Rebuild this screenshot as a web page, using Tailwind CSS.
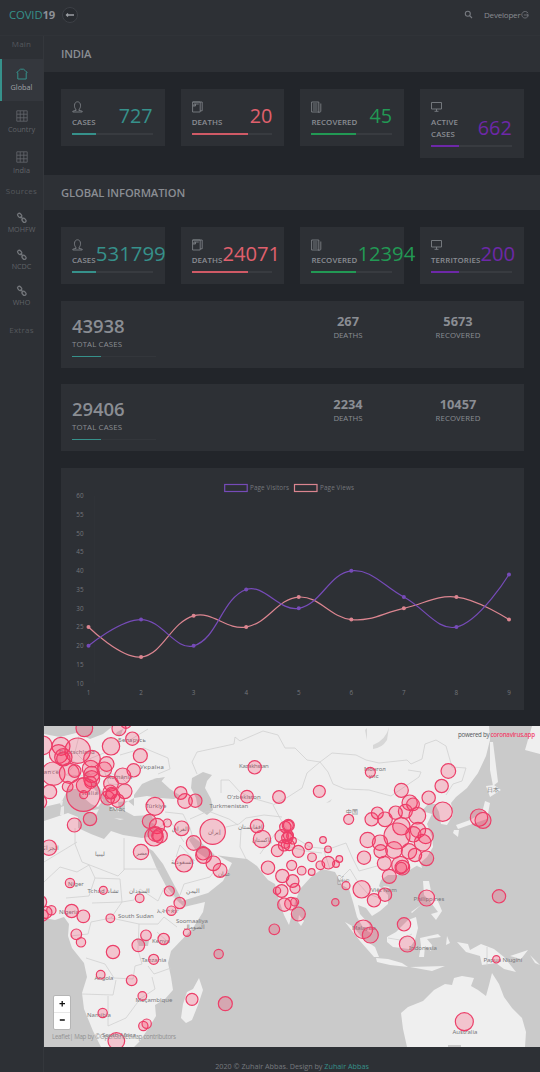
<!DOCTYPE html>
<html lang="en">
<head>
<meta charset="utf-8">
<title>COVID19</title>
<script src="https://cdn.jsdelivr.net/npm/@tailwindcss/browser@4"></script>
</head>
<body class="w-[540px] h-[1072px] overflow-hidden bg-[#2d3035] font-['Open_Sans','Noto_Sans',sans-serif] text-[#8a8d93]">
<svg class="hidden">
  <defs>
    <symbol id="user" viewBox="0 0 11 12"><path d="M3.600 8C2.700 7 2.400 5.600 2.500 4.200C2.600 2 4 .8 5.500 .8S8.400 2 8.500 4.200C8.600 5.600 8.300 7 7.400 8L6.800 9.300L10.200 10.200V11H.8V10.200L4.200 9.300Z" /></symbol>
    <symbol id="bill" viewBox="0 0 11 12"><path d="M.6 1H8.200V11H.6ZM.6 1H10.200V9.800H8.200M2 3H6.800M2 5V3M.6 5H3.500V3" /></symbol>
    <symbol id="paper" viewBox="0 0 11 12"><path d="M.6 1H7.800V11H.6ZM9.800 2.500V10.500L9 11.200H7M2 3H6.500M2 5H6.500M2 7H6.500M2 9H6.500" /></symbol>
    <symbol id="screen" viewBox="0 0 11 12"><path d="M.5 1.500H10.500V8H.5ZM3.500 10.300H7.500M5.500 8V10.300" /></symbol>
    <symbol id="grid" viewBox="0 0 12 12"><path d="M.8 .8H11.200V11.200H.8ZM4.200 .8V11.200M7.800 .8V11.200M.8 4.200H11.200M.8 7.800H11.200" /></symbol>
    <symbol id="link" viewBox="0 0 12 12"><rect x="-2.300" y="-1.600" width="4.600" height="3.200" rx="1.500" transform="translate(3.700 3.400) rotate(48)"/><rect x="-2.300" y="-1.600" width="4.600" height="3.200" rx="1.500" transform="translate(8 8.300) rotate(48)"/><path d="M4.500 4.500L7.300 7.300"/></symbol>
  </defs>
</svg>

<header class="flex h-9 items-center border-b border-[#303338] pl-[9px] pr-[11px] pb-[6px]">
  <div class="flex items-center">
    <span class="w-[49px] whitespace-nowrap text-[11.300px] leading-4 tracking-[-.1px]"><span class="font-medium text-[#36918b]">COVID</span><span class="font-bold text-[#8c8f95]">19</span></span>
    <span class="ml-[4px] flex h-4 w-4 items-center justify-center rounded-full border border-[#3d4046] bg-[#282b30]">
      <svg class="h-2 w-[10px]" viewBox="0 0 10 8" fill="none" stroke="#9a9da2" stroke-width="1.300"><path d="M9 4H1.500M3 2.500L1.500 4L3 5.500"/></svg>
    </span>
  </div>
  <div class="ml-auto flex items-center text-[8px]">
    <svg class="mr-[11px] h-[9px] w-[9px]" viewBox="0 0 9 9" fill="none" stroke="#777a80" stroke-width="1.100"><circle cx="3.800" cy="3.700" r="2.500"/><path d="M5.600 5.600L8 8"/></svg>
    <span class="w-[36px] tracking-[-0.200px] whitespace-nowrap">Developer</span>
    <svg class="ml-[1px] h-2 w-2" viewBox="0 0 8 8" fill="none" stroke="#777a80" stroke-width=".8"><path d="M7 2.200A3.300 3.300 0 1 0 7.300 4.500M2.800 4H7.300M6 2.700L7.300 4L6 5.300"/></svg>
  </div>
</header>

<div class="flex h-[1036px]">
  <nav class="flex w-[44px] shrink-0 flex-col border-r border-[#34373c] text-center text-[7.300px] text-[#606368]">
    <div class="h-[23px] pt-[2px] text-[8px] leading-3 tracking-[.25px] text-[#55585d]">Main</div>
    <div class="flex h-[42px] flex-col items-center border-l-2 border-[#36918b] bg-[#34373d] pt-[9px] pr-[2px] text-[#a0a3a8]">
      <svg class="h-3 w-3" viewBox="0 0 12 12" fill="none" stroke="#36918b" stroke-width="1"><path d="M1.800 11V4.800L.8 4.500L2.500 2.800L4.500 1.200H7.500L9.500 2.800L11.200 4.500L10.200 4.800V11Z"/></svg>
      <span class="mt-[1px] leading-3 font-medium">Global</span>
    </div>
    <div class="flex h-[41px] flex-col items-center pt-[9px]"><svg class="h-3 w-3" fill="none" stroke="#65686d" stroke-width=".8"><use href="#grid"/></svg><span class="mt-[1px] leading-3">Country</span></div>
    <div class="flex h-[40px] flex-col items-center pt-[9px]"><svg class="h-3 w-3" fill="none" stroke="#65686d" stroke-width=".8"><use href="#grid"/></svg><span class="mt-[1px] leading-3">India</span></div>
    <div class="h-[29px] pt-[3px] text-[8px] leading-3 tracking-[.25px] text-[#55585d]">Sources</div>
    <div class="flex h-[36.500px] flex-col items-center pt-[1px]"><svg class="h-3 w-3" fill="none" stroke="#73767b" stroke-width="1.300"><use href="#link"/></svg><span class="leading-[11px] text-[7.200px]">MOHFW</span></div>
    <div class="flex h-[36.500px] flex-col items-center pt-[1px]"><svg class="h-3 w-3" fill="none" stroke="#73767b" stroke-width="1.300"><use href="#link"/></svg><span class="leading-[11px] text-[7.200px]">NCDC</span></div>
    <div class="flex h-[37px] flex-col items-center pt-[1px]"><svg class="h-3 w-3" fill="none" stroke="#73767b" stroke-width="1.300"><use href="#link"/></svg><span class="leading-[11px] text-[7.200px]">WHO</span></div>
    <div class="pt-[3px] text-[8px] leading-3 tracking-[.25px] text-[#55585d]">Extras</div>
  </nav>

  <main class="flex w-[496px] shrink-0 flex-col bg-[#22252a]">
    <h2 class="flex h-9 shrink-0 items-center bg-[#2d3035] pl-[17px] pt-px text-[11.200px] font-semibold tracking-[-.2px]">INDIA</h2>
    <section class="flex h-[103px] shrink-0 items-start gap-4 pl-[17px] pt-[17px]">
      <div class="h-[57px] w-[103.700px] shrink-0 bg-[#2d3035] pl-[11px] pr-3 pt-3"><div class="flex h-[27px] items-end justify-between"><div class="text-[7.900px] font-semibold leading-3 tracking-[.1px]"><svg class="mb-[3px] h-3 w-[11px]" fill="none" stroke="#7c7f85" stroke-width=".9"><use href="#user"/></svg>CASES</div><b class="text-[19.800px] font-normal leading-[25px] text-[#36918b]">727</b></div><div class="mt-[5px] h-[2px] bg-[#383b40]"><div class="h-full w-[30%] bg-[#36918b]"></div></div></div>
      <div class="h-[57px] w-[103.700px] shrink-0 bg-[#2d3035] pl-[11px] pr-3 pt-3"><div class="flex h-[27px] items-end justify-between"><div class="text-[7.900px] font-semibold leading-3 tracking-[.1px]"><svg class="mb-[3px] h-3 w-[11px]" fill="none" stroke="#7c7f85" stroke-width=".9"><use href="#bill"/></svg>DEATHS</div><b class="text-[19.800px] font-normal leading-[25px] text-[#e0606d]">20</b></div><div class="mt-[5px] h-[2px] bg-[#383b40]"><div class="h-full w-[70%] bg-[#d05a66]"></div></div></div>
      <div class="h-[57px] w-[103.700px] shrink-0 bg-[#2d3035] pl-[11px] pr-3 pt-3"><div class="flex h-[27px] items-end justify-between"><div class="text-[7.900px] font-semibold leading-3 tracking-[.1px]"><svg class="mb-[3px] h-3 w-[11px]" fill="none" stroke="#7c7f85" stroke-width=".9"><use href="#paper"/></svg>RECOVERED</div><b class="text-[19.800px] font-normal leading-[25px] text-[#229954]">45</b></div><div class="mt-[5px] h-[2px] bg-[#383b40]"><div class="h-full w-[55%] bg-[#229954]"></div></div></div>
      <div class="h-[69px] w-[103.700px] shrink-0 bg-[#2d3035] pl-[11px] pr-3 pt-3"><div class="flex h-[39px] items-end justify-between"><div class="text-[7.900px] font-semibold leading-3 tracking-[.1px]"><svg class="mb-[3px] h-3 w-[11px]" fill="none" stroke="#7c7f85" stroke-width=".9"><use href="#screen"/></svg>ACTIVE<br>CASES</div><b class="text-[19.800px] font-normal leading-[25px] text-[#6d28a8]">662</b></div><div class="mt-[5px] h-[2px] bg-[#383b40]"><div class="h-full w-[35%] bg-[#6d28a8]"></div></div></div>
    </section>

    <h2 class="flex h-[35px] shrink-0 items-center bg-[#2d3035] pl-[17px] pt-px text-[11.200px] font-semibold tracking-[-.1px]">GLOBAL INFORMATION</h2>
    <section class="flex h-[91px] shrink-0 items-start gap-4 pl-[17px] pt-[17px]">
      <div class="h-[57px] w-[103.700px] shrink-0 bg-[#2d3035] pl-[11px] pr-3 pt-3"><div class="flex h-[27px] items-end justify-between"><div class="text-[7.900px] font-semibold leading-3 tracking-[.1px]"><svg class="mb-[3px] h-3 w-[11px]" fill="none" stroke="#7c7f85" stroke-width=".9"><use href="#user"/></svg>CASES</div><b class="text-[20.400px] font-normal leading-[25px] text-[#36918b]">531799</b></div><div class="mt-[5px] h-[2px] bg-[#383b40]"><div class="h-full w-[30%] bg-[#36918b]"></div></div></div>
      <div class="h-[57px] w-[103.700px] shrink-0 bg-[#2d3035] pl-[11px] pr-3 pt-3"><div class="flex h-[27px] items-end justify-between"><div class="text-[7.900px] font-semibold leading-3 tracking-[.1px]"><svg class="mb-[3px] h-3 w-[11px]" fill="none" stroke="#7c7f85" stroke-width=".9"><use href="#bill"/></svg>DEATHS</div><b class="text-[20.200px] font-normal leading-[25px] text-[#e0606d]">24071</b></div><div class="mt-[5px] h-[2px] bg-[#383b40]"><div class="h-full w-[70%] bg-[#d05a66]"></div></div></div>
      <div class="h-[57px] w-[103.700px] shrink-0 bg-[#2d3035] pl-[11px] pr-3 pt-3"><div class="flex h-[27px] items-end justify-between"><div class="text-[7.900px] font-semibold leading-3 tracking-[.1px]"><svg class="mb-[3px] h-3 w-[11px]" fill="none" stroke="#7c7f85" stroke-width=".9"><use href="#paper"/></svg>RECOVERED</div><b class="text-[20.200px] font-normal leading-[25px] text-[#229954]">12394</b></div><div class="mt-[5px] h-[2px] bg-[#383b40]"><div class="h-full w-[55%] bg-[#229954]"></div></div></div>
      <div class="h-[57px] w-[103.700px] shrink-0 bg-[#2d3035] pl-[11px] pr-3 pt-3"><div class="flex h-[27px] items-end justify-between"><div class="text-[7.900px] font-semibold leading-3 tracking-[.1px]"><svg class="mb-[3px] h-3 w-[11px]" fill="none" stroke="#7c7f85" stroke-width=".9"><use href="#screen"/></svg>TERRITORIES</div><b class="text-[20.200px] font-normal leading-[25px] text-[#6d28a8]">200</b></div><div class="mt-[5px] h-[2px] bg-[#383b40]"><div class="h-full w-[35%] bg-[#6d28a8]"></div></div></div>
    </section>

    <section class="flex flex-col gap-4 pl-[17px]">
      <div class="flex h-[67px] w-[463px] bg-[#2d3035] pl-[11px] pt-[14px]">
        <div class="w-[221px]"><div class="text-[18.500px] font-semibold leading-[22px] tracking-[-.1px]">43938</div><div class="text-[7.800px] leading-[14px] tracking-[.15px]">TOTAL CASES</div><div class="mt-[5px] h-px w-[84px] bg-[#33363b]"><div class="h-full w-[35%] bg-[#36918b]"></div></div></div>
        <div class="w-[110px] text-center"><div class="text-[12.800px] font-bold leading-[13px]">267</div><div class="text-[7.800px] leading-[15px]">DEATHS</div></div>
        <div class="w-[110px] text-center"><div class="text-[12.800px] font-bold leading-[13px]">5673</div><div class="text-[7.800px] leading-[15px] tracking-[.1px]">RECOVERED</div></div>
      </div>
      <div class="flex h-[67px] w-[463px] bg-[#2d3035] pl-[11px] pt-[14px]">
        <div class="w-[221px]"><div class="text-[18.500px] font-semibold leading-[22px] tracking-[-.1px]">29406</div><div class="text-[7.800px] leading-[14px] tracking-[.15px]">TOTAL CASES</div><div class="mt-[5px] h-px w-[84px] bg-[#33363b]"><div class="h-full w-[35%] bg-[#36918b]"></div></div></div>
        <div class="w-[110px] text-center"><div class="text-[12.800px] font-bold leading-[13px]">2234</div><div class="text-[7.800px] leading-[15px]">DEATHS</div></div>
        <div class="w-[110px] text-center"><div class="text-[12.800px] font-bold leading-[13px]">10457</div><div class="text-[7.800px] leading-[15px] tracking-[.1px]">RECOVERED</div></div>
      </div>
      <svg id="chart" class="mt-px h-[242px] w-[463px] bg-[#2d3035]" viewBox="61 468 463 242" fill="none" font-family="Open Sans" font-size="6.300">
        <rect x="224.700" y="484.500" width="22.500" height="7" stroke="#764bb8" stroke-width="1.200"/>
        <rect x="294.500" y="484.500" width="22.500" height="7" stroke="#db8590" stroke-width="1.200"/>
        <g fill="#74777c"><text x="250" y="490.200" textLength="39">Page Visitors</text><text x="320" y="490.200" textLength="34">Page Views</text></g>
        <path d="M94.500 496V683" stroke="#303338" stroke-width=".7"/>
      </svg>
    </section>

    <section class="mt-4 h-[321px] shrink-0">
      <svg id="map" class="h-[321px] w-[496px]" viewBox="44 726 496 321" font-family="Noto Sans" font-size="6">
        <rect x="44" y="726" width="496" height="321" fill="#cacaca"/>
        <g fill="#efefef">
          <path d="M44 734L60 737L76 733L90 739L103 734L113 726H489L490 740L486 756L478 773L467 788L456 797L451 803L453 815L447 825L441 824L439 812L435 804L428 804L422 811L432 814L427 824L432 837L433 847L427 857L418 865L408 871L397 875L388 875L381 880L379 886L388 895L388 904L380 911L372 916L366 908L358 905L360 914L369 924L373 934L364 929L357 917L353 902L349 889L342 885L335 872L322 869L311 877L300 889L295 902L292 914L289 925L284 915L278 897L275 884L268 880L263 874L257 866L247 859L230 857L215 855L204 845L192 836L189 840L197 852L209 860L215 854L232 863L223 881L208 893L182 901L180 896L163 864L153 851L148 848L156 867L166 886L178 901L184 907L205 902L203 912L193 928L171 951L168 963L171 977L173 990L165 999L155 1005L156 1016L148 1029L139 1042L134 1047H101L93 1031L84 1009L82 993L87 977L84 963L72 948L68 936L69 924L64 917L55 920L44 918Z"/>
          <path d="M407 1047L403 1029L401 1013L408 1007L423 1001L434 990L445 984L452 985L454 978L462 976L474 978L471 986L478 990L486 996L489 985L492 973L499 984L504 997L512 1008L522 1018L526 1032L525 1047Z"/>
          <path d="M199 978L203 990L198 1005L192 1020L186 1023L181 1018L183 1004L187 992L193 989Z"/>
          <path d="M486 786L490 797L501 790L494 785ZM485 801L490 803L487 819L475 823L458 829L456 825L470 820L482 813ZM454 830L459 830L458 837L453 833Z"/>
          <path d="M345 922L354 927L362 938L375 947L379 957L374 957L360 941ZM376 958L388 959L402 963L408 967L390 965L377 962Z"/>
          <path d="M387 937L396 932L408 920L416 917L418 928L415 940L409 949L393 947L387 942Z"/>
          <path d="M420 938L438 934L441 937L427 939L432 945L431 951L425 946L424 957L419 957L421 946ZM447 936L450 943L446 945ZM457 942L468 944L470 950L481 944L494 949L504 957L516 972L504 969L496 963L482 965L480 956L466 952ZM410 967L445 966L432 971Z"/>
          <path d="M423 881H429L431 891L437 899L442 911L436 920L431 914L438 912L429 900L424 895ZM421 905L412 913L411 912ZM417 866L420 860L422 868ZM383 886L390 887L386 890ZM299 915L304 921L301 926L298 922ZM490 742L493 742L498 782L493 786L490 770ZM525 750L540 754V726H532ZM510 956L528 950L521 959ZM530 955L540 965L535 963Z"/>
        </g>
        <g fill="#cacaca">
          <path d="M44 807L61 803L68 789L77 789L83 797L91 804L98 807L103 800L95 790L89 782L95 781L101 790L108 798L110 806L119 812L118 802L128 801L134 806L134 795L142 784L151 780L158 778L170 789L181 796L174 799L160 798L147 796L134 798L125 803L125 811L134 816L151 815L155 822L154 836L142 838L123 835L111 831L104 839L91 834L78 828L78 817L68 813L44 821Z"/>
          <path d="M192 778L203 772L212 775L207 781L205 788L211 799L213 810L207 815L198 809L196 798L191 788ZM153 779L165 777L160 783ZM86 771L90 773L88 781L83 779ZM136 938L149 940L148 946L139 946ZM448 1045H461V1047H448ZM115 735L117 732L123 729L121 735Z"/>
          <path d="M373 745Q386 740 389 727L387 740Q382 748 373 749ZM367 728V740L365 730ZM326 803L332 799L330 802Z" fill="#d7d7d7"/>
        </g>
        <path d="M88 811L99 809L96 815ZM61 807L64 806L64 815H60ZM61 800L63 801L62 806L60 804ZM114 818L124 819L120 820ZM151 822L158 820L154 824Z" fill="#e9e9e9"/>
        <g fill="none" stroke="#d0d0d0" stroke-width=".8" stroke-linejoin="round">
          <path d="M235 737L240 741L263 731L278 735L285 748L295 748L307 760L320 762L332 753L356 755L366 760L379 763L407 760L411 764L422 759L425 744L436 740L446 746L452 767L466 768L462 781L453 784L446 795M320 762L328 772L333 784L345 789L369 790L391 796L419 777L421 772L408 770M235 737L234 744L197 752L192 762L197 774M221 793V780L229 780L240 792L252 798L273 804M320 762L307 773L302 788L288 797L273 805L281 820L291 835L310 847L329 849L346 843L352 857L359 871L377 866M226 827L239 824L246 818L264 815L282 817M241 830L240 847L246 859M260 854L270 840L283 825M291 835L287 846L306 851L322 853M324 851L330 869M190 819L208 811L229 819L238 825M165 812L183 814L190 828L193 838M157 830L169 819L184 842M176 857L180 845L195 861M180 895L184 884L210 877L219 865M75 828V844L82 862L118 876L124 870V838M124 869H161M77 842L44 862M44 882L60 867L77 872L89 865L95 878L89 896L66 898M95 878L120 879L122 902L92 903M122 902L111 918L91 922L88 934L70 936M122 902L134 900L140 889L158 901L164 888L180 903M111 918L139 924L138 950L142 964L135 966L133 979L114 978L105 964L86 958M139 924L158 924L164 917L177 927M157 932L169 943M171 968L154 974L148 966M82 994L113 995L116 980M108 996V1026L126 1018L140 999L155 989L152 977M340 879L350 869L359 884L368 894L380 898M487 947V966M388 938L400 940L412 934M130 740L148 729M120 755L144 748L168 758L170 769L158 774M79 736L75 752L84 761L104 753M60 751L76 763L66 775L86 776L104 770L109 784L127 785M104 771L121 777L130 786M44 772L61 770"/>
        </g>
        <g id="labels" fill="#77777a" text-anchor="middle" letter-spacing=".2"></g>
        <g id="cases" fill="#ff2d5b" fill-opacity=".22" stroke="#ec3f69" stroke-width="1.200"></g>
        <text x="458" y="737" font-size="6.200" textLength="77" font-family="Open Sans" fill="#55585c">powered by <tspan fill="#f0476e" font-weight="600">coronavirus.app</tspan></text>
        <rect x="53.500" y="995.500" width="17" height="34" rx="1.500" fill="#fff" stroke="#b5b5b5"/>
        <path d="M54 1012.500H70" stroke="#ddd" stroke-width=".7"/>
        <path d="M59.500 1003.700H65M62.200 1001V1006.500M59.800 1020H64.800" stroke="#111" stroke-width="1.300"/>
        <text x="52" y="1039" font-size="6.200" font-family="Open Sans" textLength="124" fill="#929292">Leaflet| Map by ©OpenStreetMap contributors</text>
      </svg>
    </section>
    <footer class="flex h-[25px] shrink-0 items-end justify-center whitespace-nowrap bg-[#2d3035] text-[7.230px] leading-3 text-[#777a7f]"><span>2020 © Zuhair Abbas. Design by <span class="font-medium text-[#36918b]">Zuhair Abbas</span></span></footer>
  </main>
</div>
<script>
const NS = 'http://www.w3.org/2000/svg';
function add(parent, tag, attrs, text) {
  const el = document.createElementNS(NS, tag);
  for (const k in attrs) el.setAttribute(k, attrs[k]);
  if (text !== undefined) el.textContent = text;
  parent.appendChild(el);
}
const chart = document.getElementById('chart');
const px = i => 88.5 + i * 52.56, py = v => 683.3 - (v - 10) * 3.75;
for (let v = 10; v <= 60; v += 5) add(chart, 'text', {x: 83.5, y: py(v) + 2.400, 'text-anchor': 'end', fill: '#74777c'}, v);
for (let i = 0; i < 9; i++) add(chart, 'text', {x: px(i), y: 694.500, 'text-anchor': 'middle', fill: '#74777c'}, i + 1);
function series(vals, color) {
  const p = vals.map((v, i) => [px(i), py(v)]);
  const c = p.map((q, i) => {
    const a = p[i - 1] || q, b = p[i + 1] || q;
    const d1 = Math.hypot(q[0] - a[0], q[1] - a[1]), d2 = Math.hypot(b[0] - q[0], b[1] - q[1]);
    const f1 = .4 * d1 / (d1 + d2), f2 = .4 * d2 / (d1 + d2), dx = b[0] - a[0], dy = b[1] - a[1];
    if (!p[i - 1] || !p[i + 1]) return [q, q];
    return [[q[0] - f1 * dx, q[1] - f1 * dy], [q[0] + f2 * dx, q[1] + f2 * dy]];
  });
  let d = 'M' + p[0];
  for (let i = 1; i < 9; i++) d += 'C' + c[i - 1][1] + ' ' + c[i][0] + ' ' + p[i];
  add(chart, 'path', {d, stroke: color, 'stroke-width': 1.2});
  p.forEach(q => add(chart, 'circle', {cx: q[0], cy: q[1], r: 2, fill: color}));
}
series([25, 17, 28, 25, 33, 27, 30, 33, 27], '#db8590');
series([20, 27, 20, 35, 30, 40, 33, 25, 39], '#764bb8');

const labels = document.getElementById('labels');
[['Deutschland',77,754,36],['France',48,774,22],['Беларусь',132,742,28],['Україна',152,769,24],['România',120,779,25],['Italia',90,795,16],['Ελλάς',117,811,16],['Türkiye',156,808,21],['Kazakhstan',254,768,30],['Oʻzbekiston',244,799,34],['Turkmenistan',229,808,39],['ليبيا',100,856],['العراق',180,831],['إيران',214,834],['السعودية',182,864],['افغانستان',250,829],['پاکستان',262,842],['مصر',141,855],['Niger',76,886,16],['Tchad تشاد',103,893,31],['السودان',139,893],['اليمن',193,893],['عمان',224,876],['الجزائر',50,850],['Nigeria',69,914,20],['South Sudan',136,918,36],['ኢትዮጵያ',168,913],['Soomaaliya',192,923,32],['الصومال',194,929],['Kenya',161,943,18],['Tanzania',154,962,25],['Angola',104,980,19],['Moçambique',154,1002,37],['Namibia',99,1017,24],['South Africa',119,1037,34],['Монгол',375,771,22],['улс',374,778],['中国',352,814],['日本',493,792],['Việt Nam',384,892,26],['မြန်မာ',343,882],['Philippines',429,901,31],['Malaysia',364,930,24],['Indonesia',423,950,28],['Papua Niugini',503,962,39],['Australia',465,1034,25]]
.forEach(([t, x, y, w]) => add(labels, 'text', w ? {x, y, textLength: w} : {x, y}, t));

const cases = document.getElementById('cases');
const tiles = [
 [40, 722, [[133,19,25],[237,20,21],[277,50,20],[213,73,26],[113,86,38],[8,70,28],[63,73,27],[56,96,28],[70,106,26],[70,110,20],[156,110,25],[200,126,22],[193,142,22],[301,101,21],[281,145,20],[248,162,24],[40,155,35],[88,154,30],[104,147,19],[152,140,25],[155,157,24],[155,170,24],[152,181,18],[132,190,23],[83,194,16],[29,209,21],[130,218,50],[131,218,12],[213,185,22],[210,210,21],[218,222,22],[203,228,21],[215,213,17],[254,208,22],[233,236,20],[0,240,20],[103,309,21],[150,291,20],[27,377,23],[345,253,27],[422,213,19],[435,237,22],[466,236,20],[328,298,21],[351,312,23],[382,303,12],[342,344,28],[346,336,22],[360,341,22],[351,342,16],[303,390,23],[425,319,22],[518,329,38],[461,363,22],[491,400,24],[489,394,20],[520,424,22],[540,445,21],[432,424,26],[90,483,14],[190,505,12],[388,507,15],[644,136,20],[621,224,19],[717,225,19],[651,312,20],[666,351,26],[712,386,18],[684,437,20],[725,343,20],[736,315,17],[742,348,17],[732,370,17],[745,310,18],[727,462,20],[725,507,19],[711,506,11],[745,340,15],[736,367,12],[258,4,15]]],
 [290, 722, [[88,208,18],[241,151,15],[475,147,22],[455,192,20],[334,205,21],[416,227,20],[359,242,23],[369,247,19],[176,292,15],[262,273,18],[245,292,20],[285,292,22],[317,272,20],[346,268,21],[382,281,25],[458,269,29],[334,313,26],[321,342,39],[233,354,23],[270,362,23],[272,388,20],[222,407,20],[384,324,23],[370,337,23],[407,342,23],[398,362,25],[357,388,23],[375,399,20],[312,384,25],[283,424,21],[331,429,26],[337,437,22],[334,437,16],[409,409,22],[298,463,21],[567,287,26],[579,295,24],[25,388,18],[56,372,11],[99,354,10],[114,382,10],[66,406,13],[91,430,13],[115,422,19],[138,426,10],[148,411,10],[5,430,15],[35,446,13],[65,450,10],[9,356,10],[8,477,19],[15,499,15],[168,491,12],[215,502,26],[285,518,20],[252,535,20],[410,528,24],[627,523,20],[-5,310,15],[-2,370,16],[0,342,10]]],
 [40, 897, [[299,4,13],[0,15,20],[34,40,14],[18,46,18],[8,55,17],[95,42,20],[130,58,19],[211,64,13],[109,112,16],[123,136,14],[219,165,20],[318,115,16],[295,145,19],[371,126,17],[341,187,15],[182,233,13],[275,250,16],[307,297,13],[188,348,14],[310,387,14],[320,380,14],[229,432,25],[456,307,18],[556,320,21],[536,171,14],[703,97,16],[441,107,11],[419,18,17],[394,41,14],[733,23,20]]],
 [290, 897, [[3,20,19],[14,15,12],[25,51,21],[136,16,11],[220,97,28],[241,114,24],[342,82,20],[352,141,24],[619,187,11],[523,374,27]]]
];
tiles.forEach(([ox, oy, list]) => list.forEach(([x, y, r]) => add(cases, 'circle', {cx: ox + x / 3, cy: oy + y / 3, r: r / 3})));
</script>
</body>
</html>
